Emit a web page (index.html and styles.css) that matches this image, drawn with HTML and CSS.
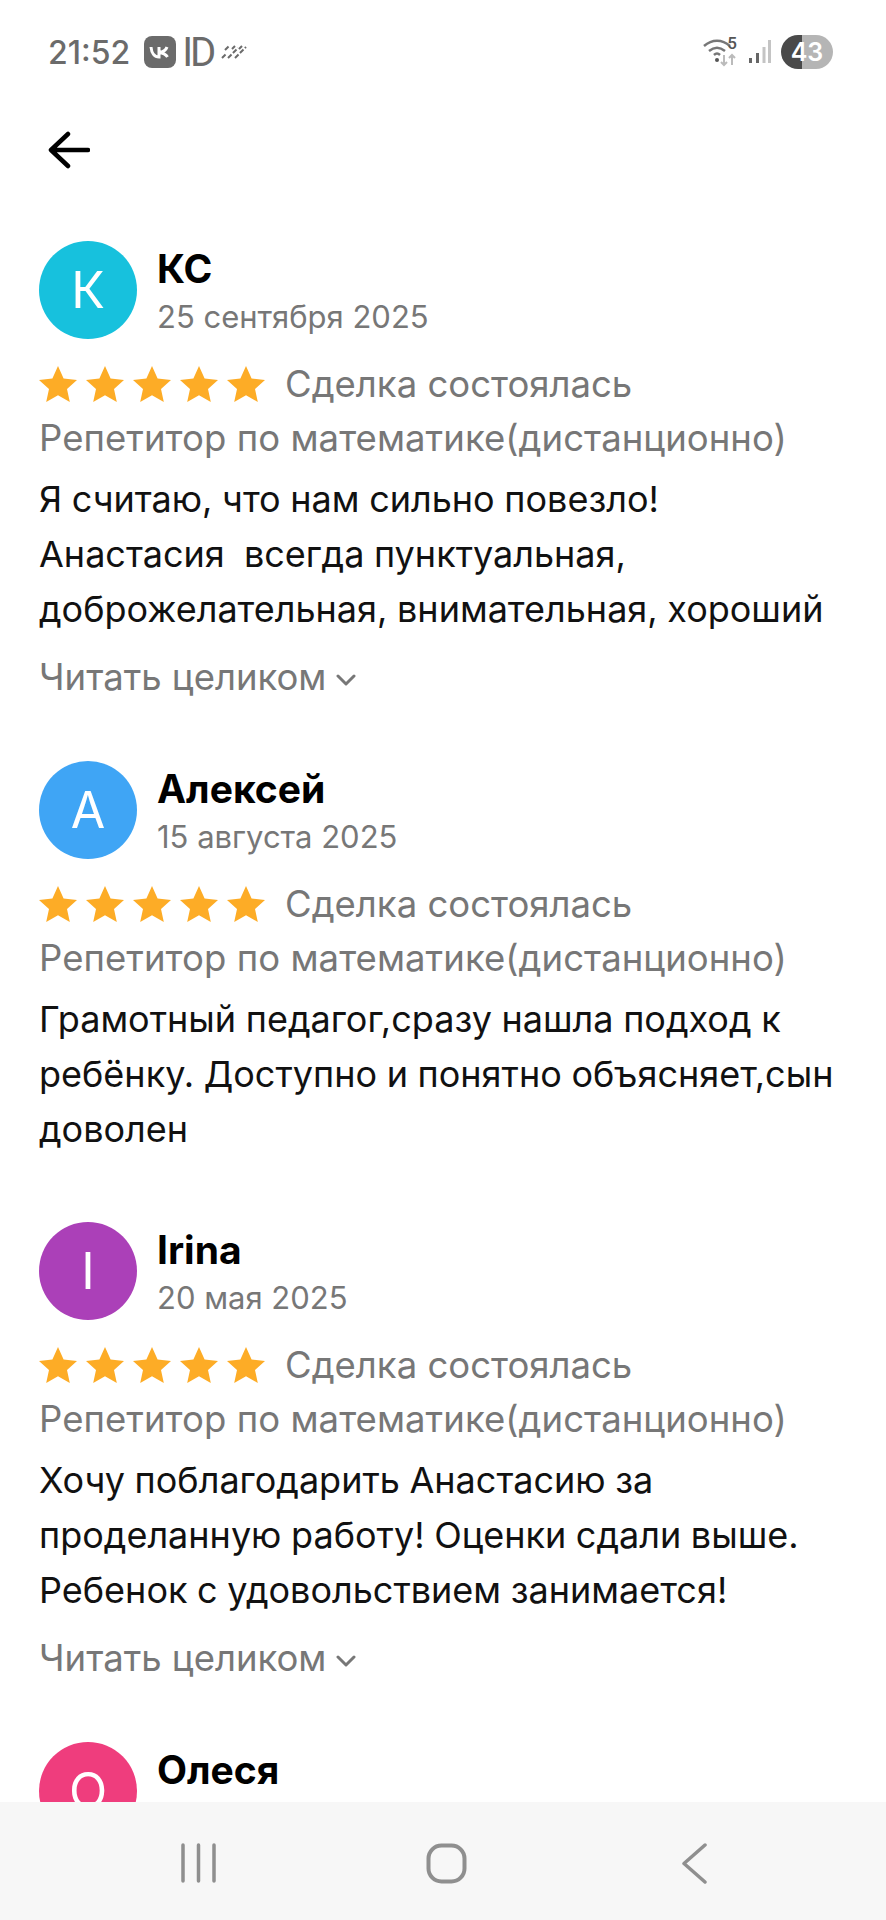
FILE: index.html
```html
<!DOCTYPE html>
<html lang="ru">
<head>
  <meta charset="UTF-8" />
  <meta name="viewport" content="width=device-width, initial-scale=1.0"/>
  <title>Отзывы</title>
  <link rel="stylesheet" href="styles.css">
</head>
<body>
  <svg class="sprite" width="0" height="0">
    <symbol id="star" viewBox="0 0 38 36">
      <path d="M19 0l5.6 12.4 13.4 1.5-10 9.1 2.8 13-11.8-6.7L7.200 36 10 23 0 13.900l13.400-1.500z"/>
    </symbol>
    <symbol id="chevron" viewBox="0 0 20 12">
      <path d="M2 2l8 8 8-8" fill="none" stroke="#777" stroke-width="3" stroke-linecap="round" stroke-linejoin="round"/>
    </symbol>
  </svg>

  <div class="status-bar">
    <div class="status-left">
      <span class="time">21:52</span>
      <svg class="vk-icon" width="32" height="32" viewBox="0 0 32 32">
        <rect width="32" height="32" rx="8" fill="#6b6b6b"/>
        <path d="M7 11c.5 6 3.500 10 8 10v-10M23 11c-1 3-3.500 5-8 5.500 4 .5 7 2 8.500 4.500" fill="none" stroke="#fff" stroke-width="3"/>
      </svg>
      <span class="id-mark">ID</span>
      <svg class="stripes" width="26" height="16" viewBox="0 0 26 16">
        <path d="M1 14l4-4M7 14l10-10M14 14l11-11M4 6l4-4M11 5l3-3M18 5l3-3" stroke="#6b6b6b" stroke-width="2" stroke-dasharray="5 2" fill="none"/>
      </svg>
    </div>
    <div class="status-right">
      <svg width="34" height="30" viewBox="0 0 34 30">
        <path d="M1 9c8-7 18-7 26 0M6 14c5-4 11-4 16 0M11 18c2-2 4-2 6 0" fill="none" stroke="#777" stroke-width="2.500"/>
        <circle cx="14" cy="23" r="2" fill="#555"/>
        <path d="M21 18v10M18 25l3 3 3-3M29 28V18M26 21l3-3 3 3" fill="none" stroke="#bbb" stroke-width="2"/>
      </svg>
      <span class="wifi-num">5</span>
      <svg class="signal" width="24" height="24" viewBox="0 0 24 24">
        <path d="M2 18h3v5H2zM9 13h3v10H9z" fill="#666"/>
        <path d="M15.500 7h3v16h-3zM21 0h3v23h-3z" fill="#c4c4c4"/>
      </svg>
      <span class="battery">43</span>
    </div>
  </div>

  <div class="toolbar">
    <svg width="42" height="38" viewBox="0 0 42 38">
      <path d="M20 3L3 19l17 16M3 19h37" fill="none" stroke="#000" stroke-width="4.500" stroke-linecap="round" stroke-linejoin="round"/>
    </svg>
  </div>

  <main class="reviews">
    <article class="review">
      <div class="review-head">
        <div class="avatar avatar-cyan">К</div>
        <div class="author">
          <div class="name">КС</div>
          <div class="date">25 сентября 2025</div>
        </div>
      </div>
      <div class="rating">
        <span class="stars">
          <svg><use href="#star"/></svg><svg><use href="#star"/></svg><svg><use href="#star"/></svg><svg><use href="#star"/></svg><svg><use href="#star"/></svg>
        </span>
        <span class="deal">Сделка состоялась</span>
      </div>
      <div class="service">Репетитор по математике(дистанционно)</div>
      <p class="text">Я считаю, что нам сильно повезло!<br>Анастасия&nbsp; всегда пунктуальная,<br>доброжелательная, внимательная, хороший</p>
      <div class="more">Читать целиком <svg><use href="#chevron"/></svg></div>
    </article>

    <article class="review">
      <div class="review-head">
        <div class="avatar avatar-blue">А</div>
        <div class="author">
          <div class="name">Алексей</div>
          <div class="date">15 августа 2025</div>
        </div>
      </div>
      <div class="rating">
        <span class="stars">
          <svg><use href="#star"/></svg><svg><use href="#star"/></svg><svg><use href="#star"/></svg><svg><use href="#star"/></svg><svg><use href="#star"/></svg>
        </span>
        <span class="deal">Сделка состоялась</span>
      </div>
      <div class="service">Репетитор по математике(дистанционно)</div>
      <p class="text">Грамотный педагог,сразу нашла подход к<br>ребёнку. Доступно и понятно объясняет,сын<br>доволен</p>
    </article>

    <article class="review">
      <div class="review-head">
        <div class="avatar avatar-purple">I</div>
        <div class="author">
          <div class="name">Irina</div>
          <div class="date">20 мая 2025</div>
        </div>
      </div>
      <div class="rating">
        <span class="stars">
          <svg><use href="#star"/></svg><svg><use href="#star"/></svg><svg><use href="#star"/></svg><svg><use href="#star"/></svg><svg><use href="#star"/></svg>
        </span>
        <span class="deal">Сделка состоялась</span>
      </div>
      <div class="service">Репетитор по математике(дистанционно)</div>
      <p class="text">Хочу поблагодарить Анастасию за<br>проделанную работу! Оценки сдали выше.<br>Ребенок с удовольствием занимается!</p>
      <div class="more">Читать целиком <svg><use href="#chevron"/></svg></div>
    </article>

    <article class="review">
      <div class="review-head">
        <div class="avatar avatar-pink">О</div>
        <div class="author">
          <div class="name">Олеся</div>
        </div>
      </div>
    </article>
  </main>

  <nav class="nav-bar">
    <svg width="35" height="40" viewBox="0 0 35 40">
      <path d="M2 2v36M17.500 2v36M33 2v36" stroke="#8f8f8f" stroke-width="3.500" stroke-linecap="round" fill="none"/>
    </svg>
    <svg class="nav-home" width="41" height="41" viewBox="0 0 41 41">
      <rect x="2.500" y="2.500" width="36" height="36" rx="13" fill="none" stroke="#8f8f8f" stroke-width="4"/>
    </svg>
    <svg width="25" height="41" viewBox="0 0 25 41">
      <path d="M23 2L2 20.500 23 39" fill="none" stroke="#8f8f8f" stroke-width="3.500" stroke-linecap="round" stroke-linejoin="round"/>
    </svg>
  </nav>
</body>
</html>
```

FILE: styles.css
```css
* {
  box-sizing: border-box;
}
html, body {
  margin: 0;
  height: 1920px;
}
body {
  display: flex;
  flex-direction: column;
  width: 886px;
  overflow: hidden;
  background: #fff;
  font-family: Inter, "Noto Sans", sans-serif;
  color: #000;
}
.sprite {
  position: absolute;
}
.status-bar {
  flex: none;
  display: flex;
  justify-content: space-between;
  align-items: center;
  height: 52px;
  margin-top: 26px;
  padding: 0 53px 0 48px;
  color: #6b6b6b;
}
.status-left, .status-right {
  display: flex;
  align-items: center;
}
.time {
  font-size: 32px;
  font-weight: 500;
  margin-right: 14px;
}
.id-mark {
  font-family: Roboto, sans-serif;
  font-size: 40px;
  font-weight: 400;
  letter-spacing: -3px;
  margin: 2px 8px 0 6px;
  line-height: 1;
}
.wifi-num {
  font-family: Roboto, sans-serif;
  font-size: 17px;
  font-weight: 500;
  margin: -18px 10px 0 -10px;
  color: #555;
}
.signal {
  margin-right: 10px;
}
.battery {
  width: 52px;
  height: 34px;
  border-radius: 17px;
  background: linear-gradient(to right, #4a4a4a 40%, #b5b5b5 40%);
  color: #fff;
  font-size: 25px;
  font-weight: 600;
  line-height: 34px;
  text-align: center;
}
.toolbar {
  flex: none;
  height: 163px;
  padding: 53px 0 0 48px;
}
.reviews {
  flex: 1;
  overflow: hidden;
  padding: 0 39px;
}
.review {
  margin-bottom: 65px;
}
.review-head {
  display: flex;
  align-items: flex-start;
  gap: 20px;
  height: 98px;
}
.author {
  padding-top: 4px;
}
.avatar {
  flex: none;
  width: 98px;
  height: 98px;
  border-radius: 50%;
  color: #fff;
  font-size: 50px;
  line-height: 98px;
  text-align: center;
}
.avatar-cyan { background: #17c1dd; }
.avatar-blue { background: #3fa5f5; }
.avatar-purple { background: #ab40b8; }
.avatar-pink { background: #ef3d7d; }
.name {
  font-size: 39px;
  font-weight: 700;
  line-height: 48px;
}
.date {
  font-size: 31px;
  line-height: 48px;
  color: #777;
}
.rating {
  display: flex;
  align-items: center;
  height: 55px;
  margin-top: 17px;
}
.stars {
  display: flex;
  gap: 9px;
  margin-right: 20px;
}
.stars svg {
  width: 38px;
  height: 36px;
  fill: #fdac26;
}
.deal, .service, .more {
  font-size: 36.500px;
  color: #777;
}
.service {
  line-height: 54px;
  letter-spacing: 0.05px;
}
.text {
  margin: 0;
  padding-top: 7px;
  font-size: 36px;
  line-height: 55px;
  word-spacing: -0.5px;
  color: #111;
}
.more {
  display: flex;
  align-items: center;
  gap: 10px;
  height: 38px;
  margin-top: 21px;
}
.more svg {
  width: 20px;
  height: 12px;
  margin-top: 6px;
}
.nav-bar {
  flex: none;
  display: flex;
  justify-content: space-between;
  align-items: center;
  height: 118px;
  padding: 4px 179px 0 181px;
  background: #f7f7f7;
}
.nav-home {
  margin-right: 6px;
}
```
